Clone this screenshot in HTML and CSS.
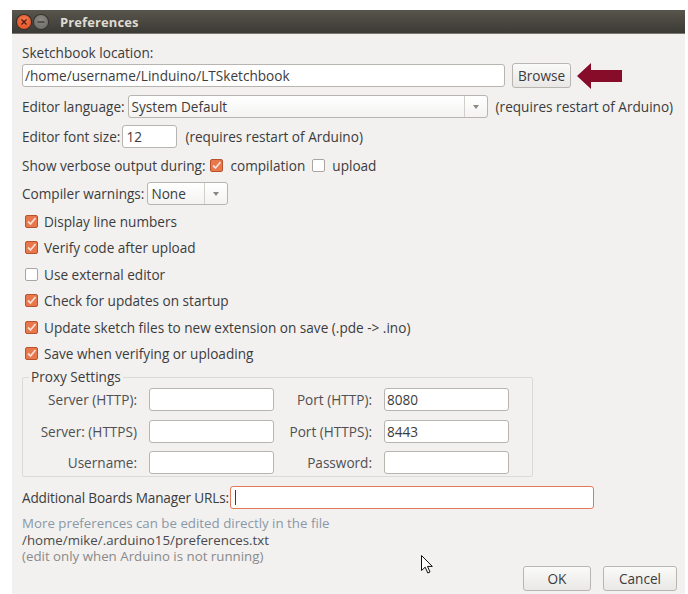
FILE: index.html
```html
<!DOCTYPE html>
<html>
<head>
<meta charset="utf-8">
<title>Preferences</title>
<link rel="stylesheet" href="styles.css">
</head>
<body>
<div class="window">
  <div class="titlebar">
    <span class="wbtn close"><svg width="8" height="8" viewBox="0 0 8 8"><path d="M1.5 1.5l5 5M6.5 1.5l-5 5" stroke="#4a1a0c" stroke-width="1.3"/></svg></span>
    <span class="wbtn minimize"><svg width="8" height="8" viewBox="0 0 8 8"><path d="M0.5 4h7" stroke="#3a3935" stroke-width="1.3"/></svg></span>
    <span class="title">Preferences</span>
  </div>

  <div class="content">
    <div class="label-line">Sketchbook location:</div>
    <div class="row row-path">
      <div class="field path">/home/username/Linduino/LTSketchbook</div>
      <div class="button browse">Browse</div>
      <svg class="pointer-arrow" width="46" height="26" viewBox="0 0 46 26"><path d="M0 13L14 0V7H45V19H14V26Z" fill="#870c2a"/></svg>
    </div>

    <div class="row row-lang">
      <span class="lbl">Editor language:</span>
      <div class="select lang"><span class="sel-text">System Default</span><span class="sel-arrow"></span></div>
      <span class="note">(requires restart of Arduino)</span>
    </div>

    <div class="row row-font">
      <span class="lbl">Editor font size:</span>
      <div class="field fontsize">12</div>
      <span class="note">(requires restart of Arduino)</span>
    </div>

    <div class="row row-verbose">
      <span class="lbl">Show verbose output during:</span>
      <span class="check on"></span><span class="opt">compilation</span>
      <span class="check"></span><span class="opt">upload</span>
    </div>

    <div class="row row-warn">
      <span class="lbl">Compiler warnings:</span>
      <div class="select warn"><span class="sel-text">None</span><span class="sel-arrow"></span></div>
    </div>

    <ul class="checklist">
      <li><span class="check on"></span>Display line numbers</li>
      <li><span class="check on"></span>Verify code after upload</li>
      <li><span class="check"></span>Use external editor</li>
      <li><span class="check on"></span>Check for updates on startup</li>
      <li><span class="check on"></span>Update sketch files to new extension on save (.pde -&gt; .ino)</li>
      <li><span class="check on"></span>Save when verifying or uploading</li>
    </ul>

    <fieldset class="proxy">
      <legend>Proxy Settings</legend>
      <div class="proxy-grid">
        <span class="plbl">Server (HTTP):</span><div class="field pf"></div>
        <span class="plbl">Port (HTTP):</span><div class="field pf">8080</div>
        <span class="plbl">Server: (HTTPS)</span><div class="field pf"></div>
        <span class="plbl">Port (HTTPS):</span><div class="field pf">8443</div>
        <span class="plbl">Username:</span><div class="field pf"></div>
        <span class="plbl">Password:</span><div class="field pf"></div>
      </div>
    </fieldset>

    <div class="row row-urls">
      <span class="lbl">Additional Boards Manager URLs:</span>
      <div class="field urls focused"><span class="caret"></span></div>
    </div>

    <div class="more">
      <div class="dim">More preferences can be edited directly in the file</div>
      <div class="path-note">/home/mike/.arduino15/preferences.txt</div>
      <div class="dim2">(edit only when Arduino is not running)</div>
    </div>

    <div class="footer">
      <div class="button ok">OK</div>
      <div class="button cancel">Cancel</div>
    </div>
  </div>

  <svg class="mouse" width="12" height="19" viewBox="0 0 12 19"><path d="M0.5 0.5V15.5L4.2 12.2L6.8 18L9 17L6.5 11.4H11.3Z" fill="#fff" stroke="#111" stroke-width="1" stroke-linejoin="round"/></svg>
</div>
</body>
</html>
```

FILE: styles.css
```css
html, body {
  margin: 0;
  padding: 0;
  background: #ffffff;
}

body {
  font-family: "Open Sans", "Noto Sans", sans-serif;
  font-size: 13.6px;
  color: #3c3c3c;
}

.window {
  position: relative;
  margin: 10px 3px 0 12px;
  width: 673px;
  height: 584px;
  background: #f2f1f0;
  overflow: hidden;
}

/* title bar */
.titlebar {
  height: 23px;
  display: flex;
  align-items: center;
  background: linear-gradient(#58554c, #3c3a35);
  border-bottom: 1px solid #7a7773;
  padding-left: 5px;
}

.wbtn {
  width: 14px;
  height: 14px;
  border-radius: 50%;
  display: flex;
  align-items: center;
  justify-content: center;
  margin-right: 3px;
}

.wbtn.close {
  background: radial-gradient(circle at 50% 35%, #f57a4e, #df4a1f);
  box-shadow: 0 0 0 1px #3a2a22;
}

.wbtn.minimize {
  background: radial-gradient(circle at 50% 35%, #8b8983, #6a6862);
  box-shadow: 0 0 0 1px #35332f;
}

.title {
  margin-left: 9px;
  font-weight: bold;
  color: #dfdbd2;
  font-size: 13px;
  letter-spacing: 0.1px;
}

/* dialog body */
.content {
  padding: 10px 8px 0 10px;
}

.label-line {
  line-height: 18px;
  height: 18px;
}

.row {
  display: flex;
  align-items: center;
  white-space: nowrap;
}

.row-path { height: 25px; margin-top: 1px; }
.row-lang { height: 25px; margin-top: 6px; }
.row-font { height: 24px; margin-top: 5px; }
.row-verbose { height: 22px; margin-top: 6px; }
.row-warn { height: 23px; margin-top: 6px; }
.row-urls { height: 23px; margin-top: 9px; }

.lbl { margin-right: 3px; }

.field {
  box-sizing: border-box;
  height: 23px;
  background: #ffffff;
  border: 1px solid #b8b5b0;
  border-radius: 3px;
  padding: 0 2px;
  display: flex;
  align-items: center;
  white-space: nowrap;
}

.field.path { width: 483px; }
.field.fontsize { width: 55px; padding-left: 3px; }
.field.urls { width: 364px; }
.field.focused { border-color: #e07a58; }

.caret {
  width: 1px;
  height: 15px;
  background: #3c3c3c;
  margin-left: 2px;
}

.button {
  box-sizing: border-box;
  height: 25px;
  border: 1px solid #b9b6b1;
  border-radius: 3px;
  background: linear-gradient(#fafaf9, #e9e8e6);
  display: flex;
  align-items: center;
  justify-content: center;
}

.browse { width: 59px; margin-left: 7px; }
.pointer-arrow { margin-left: 6px; }

.select {
  box-sizing: border-box;
  height: 23px;
  border: 1px solid #b8b5b0;
  border-radius: 3px;
  background: linear-gradient(#ffffff, #f4f3f2);
  display: flex;
  align-items: stretch;
}

.sel-text {
  flex: 1;
  display: flex;
  align-items: center;
  padding-left: 3px;
}

.sel-arrow {
  width: 22px;
  border-left: 1px solid #d2cfcb;
  position: relative;
}

.sel-arrow::after {
  content: "";
  position: absolute;
  left: 8px;
  top: 9px;
  border-left: 3.5px solid transparent;
  border-right: 3.5px solid transparent;
  border-top: 4px solid #8a8884;
}

.select.lang { width: 360px; }
.select.warn { width: 81px; }

.row-lang .note { margin-left: 8px; }
.row-font .note { margin-left: 8px; }
.row-font .lbl { margin-right: 2px; }

/* checkboxes */
.check {
  box-sizing: border-box;
  width: 13px;
  height: 13px;
  border: 1px solid #a9a6a2;
  border-radius: 2px;
  background: #ffffff;
  display: inline-block;
  flex: none;
}

.check.on {
  border-color: #b8532c;
  background: #e8774c url("data:image/svg+xml,%3Csvg xmlns='http://www.w3.org/2000/svg' width='11' height='11' viewBox='0 0 11 11'%3E%3Cpath d='M2 5.5L4.5 8L9.5 2' fill='none' stroke='%23f6ddd2' stroke-width='1.8'/%3E%3C/svg%3E") center / 11px 11px no-repeat;
}

.row-verbose .lbl { margin-right: 5px; }
.row-verbose .opt { margin-left: 7px; margin-right: 7px; }

.checklist {
  list-style: none;
  margin: 3px 0 0 0;
  padding: 0;
}

.checklist li {
  height: 26.5px;
  display: flex;
  align-items: center;
  padding-left: 3px;
}

.checklist .check { margin-right: 6px; }

/* proxy group */
.proxy {
  margin: 2px 0 0 0;
  padding: 0 0 2px 0;
  width: 511px;
  box-sizing: border-box;
  border: 1px solid #dcdad6;
  border-radius: 2px;
}

.proxy legend {
  margin-left: 6px;
  padding: 0 2px;
  line-height: 16px;
}

.proxy-grid {
  display: grid;
  grid-template-columns: 114px 125px 86px 125px;
  column-gap: 12px;
  row-gap: 8.5px;
  align-items: center;
  padding-top: 3px;
}

.proxy-grid .plbl {
  text-align: right;
  color: #505050;
}

.field.pf { width: 125px; }

/* notes */
.row-urls .lbl {
  margin-right: 1px;
  letter-spacing: -0.15px;
}

.more {
  margin-top: 6px;
  font-size: 13.3px;
  line-height: 16.5px;
}

.more > div { height: 16.5px; }

.more .dim { color: #8a98a6; }
.more .path-note { color: #4a4a4a; }
.more .dim2 { color: #8a8a8a; }

.footer {
  display: flex;
  justify-content: flex-end;
  gap: 12px;
  margin-top: 1px;
}

.ok { width: 68px; }
.cancel { width: 74px; }

.mouse {
  position: absolute;
  left: 409px;
  top: 545px;
}
```
